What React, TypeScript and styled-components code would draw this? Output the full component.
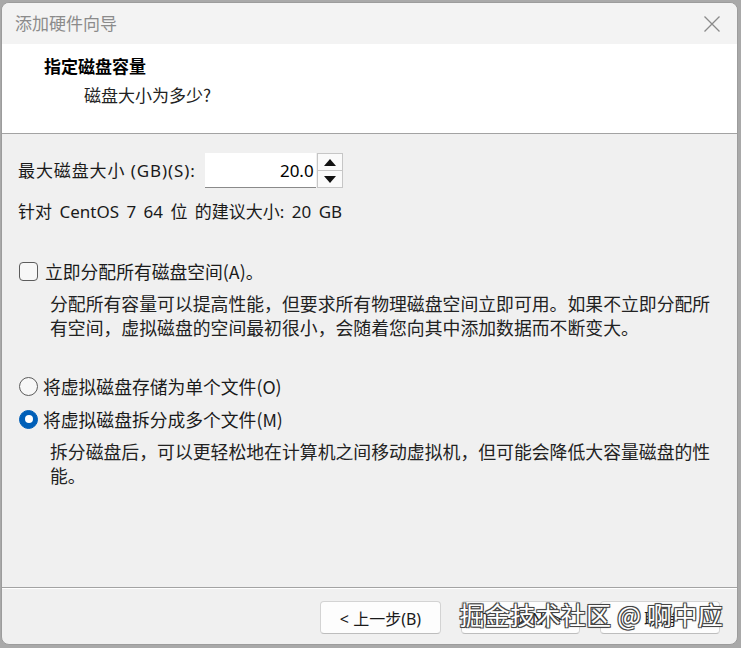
import React from "react";
import styled, { createGlobalStyle } from "styled-components";

const GlobalStyle = createGlobalStyle`
  html, body {
    margin: 0;
    padding: 0;
    background: #a9a9a9;
  }
  body {
    font-family: "Noto Sans", "Noto Sans CJK SC", sans-serif;
    color: #1a1a1a;
  }
`;

const Screen = styled.div`
  width: 741px;
  height: 648px;
  padding: 2px 3px 3px 1px;
  box-sizing: border-box;
  display: flex;
`;

const Window = styled.div`
  flex: 1;
  display: flex;
  flex-direction: column;
  background: #f0f0f0;
  border: 1px solid #9c9c9c;
  border-radius: 8px;
  overflow: hidden;
  position: relative;
`;

const TitleBar = styled.div`
  height: 41px;
  display: flex;
  align-items: center;
  justify-content: space-between;
  padding: 0 16px 3px 13px;
  box-sizing: border-box;
  background: #f3f3f3;
`;

const TitleText = styled.span`
  font-family: "Noto Sans CJK SC", sans-serif;
  font-size: 17px;
  color: #8b8b8b;
`;

const CloseIcon = styled.svg`
  width: 18px;
  height: 18px;
  margin-top: 3px;
`;

const Header = styled.div`
  height: 90px;
  background: #ffffff;
  border-bottom: 1px solid #a3a3a3;
  box-sizing: border-box;
  padding: 9px 0 0 42px;
  display: flex;
  flex-direction: column;
`;

const HeaderTitle = styled.div`
  font-family: "Noto Sans CJK SC", sans-serif;
  font-size: 17px;
  font-weight: 700;
  line-height: 26px;
  color: #000;
`;

const HeaderSub = styled.div`
  font-family: "Noto Sans CJK SC", sans-serif;
  font-size: 17px;
  line-height: 26px;
  margin-top: 3px;
  padding-left: 40px;
  color: #222;
`;

const Body = styled.div`
  flex: 1;
  padding: 19px 17px 0 16px;
  display: flex;
  flex-direction: column;
`;

const SizeRow = styled.div`
  display: flex;
  align-items: center;
`;

const Label = styled.span`
  font-size: 17px;
  line-height: 24px;
  letter-spacing: 0.9px;
  margin-right: 9px;
`;

const NumberBox = styled.div`
  width: 111px;
  height: 35px;
  box-sizing: border-box;
  background: #fff;
  border-bottom: 1px solid #8a8a8a;
  display: flex;
  align-items: center;
  justify-content: flex-end;
  padding-right: 2px;
  font-size: 17px;
  color: #000;
`;

const Spin = styled.div`
  width: 26px;
  height: 35px;
  margin-left: 1px;
  display: flex;
  flex-direction: column;
  box-sizing: border-box;
  border: 1px solid #c6c6c6;
  background: #fafafa;
`;

const SpinHalf = styled.div<{ $top?: boolean }>`
  flex: 1;
  display: flex;
  align-items: center;
  justify-content: center;
  border-bottom: ${({ $top }) => ($top ? "1px solid #c6c6c6" : "none")};
`;

const Arrow = styled.div<{ $up?: boolean }>`
  width: 0;
  height: 0;
  border-left: 6px solid transparent;
  border-right: 6px solid transparent;
  ${({ $up }) =>
    $up ? "border-bottom: 7px solid #111;" : "border-top: 7px solid #111;"}
`;

const Hint = styled.div`
  font-size: 17px;
  line-height: 24px;
  word-spacing: 3px;
  margin-top: 12px;
`;

const OptionRow = styled.div<{ $gap: number }>`
  display: flex;
  align-items: center;
  margin-top: ${({ $gap }) => $gap}px;
  height: 24px;
`;

const CheckBox = styled.div`
  width: 19px;
  height: 19px;
  box-sizing: border-box;
  border: 1px solid #5c5c5c;
  border-radius: 4px;
  background: #f7f7f7;
  margin: 0 7px 0 1px;
`;

const Radio = styled.div<{ $checked?: boolean }>`
  width: 19px;
  height: 19px;
  box-sizing: border-box;
  border-radius: 50%;
  margin: 0 5px 0 1px;
  display: flex;
  align-items: center;
  justify-content: center;
  border: ${({ $checked }) =>
    $checked ? "1px solid #005fb8" : "1px solid #5c5c5c"};
  background: ${({ $checked }) => ($checked ? "#005fb8" : "#f7f7f7")};

  &::after {
    content: "";
    display: ${({ $checked }) => ($checked ? "block" : "none")};
    width: 8px;
    height: 8px;
    border-radius: 50%;
    background: #fff;
  }
`;

const OptionText = styled.span`
  font-family: "Noto Sans CJK SC", sans-serif;
  font-size: 17.8px;
  line-height: 24px;
  color: #1a1a1a;
`;

const Desc = styled.p`
  margin: 8px 0 0 32px;
  width: 668px;
  font-family: "Noto Sans CJK SC", sans-serif;
  font-size: 17.85px;
  line-height: 24px;
  color: #222;
`;

const Footer = styled.div`
  height: 57px;
  box-sizing: border-box;
  border-top: 1px solid #a3a3a3;
  box-shadow: inset 0 1px 0 #ffffff;
  display: flex;
  justify-content: flex-end;
  align-items: flex-start;
  gap: 20px;
  padding: 13px 17px 0 0;
`;

const Button = styled.button<{ $w: number }>`
  width: ${({ $w }) => $w}px;
  height: 33px;
  background: #fdfdfd;
  border: 1px solid #d3d3d3;
  border-bottom-color: #bdbdbd;
  border-radius: 4px;
  font-family: "Noto Sans", "Noto Sans CJK SC", sans-serif;
  font-size: 16px;
  color: #1a1a1a;
  padding: 0;
`;

const Watermark = styled.div`
  position: absolute;
  right: 14px;
  bottom: 12px;
  font-family: "Noto Sans CJK SC", sans-serif;
  font-size: 25px;
  color: #ffffff;
  letter-spacing: 0.3px;
  text-shadow: 1px 1px 0 #444, -1px -1px 0 #444, 1px -1px 0 #444,
    -1px 1px 0 #444, 0 0 2px #222;
  pointer-events: none;
`;

export default function App() {
  return (
    <>
      <GlobalStyle />
      <Screen>
        <Window>
          <TitleBar>
            <TitleText>添加硬件向导</TitleText>
            <CloseIcon viewBox="0 0 18 18">
              <path
                d="M1.5 1.5 L16.5 16.5 M16.5 1.5 L1.5 16.5"
                stroke="#8a8a8a"
                strokeWidth="1.3"
                fill="none"
              />
            </CloseIcon>
          </TitleBar>
          <Header>
            <HeaderTitle>指定磁盘容量</HeaderTitle>
            <HeaderSub>磁盘大小为多少?</HeaderSub>
          </Header>
          <Body>
            <SizeRow>
              <Label>最大磁盘大小 (GB)(S):</Label>
              <NumberBox>20.0</NumberBox>
              <Spin>
                <SpinHalf $top>
                  <Arrow $up />
                </SpinHalf>
                <SpinHalf>
                  <Arrow />
                </SpinHalf>
              </Spin>
            </SizeRow>
            <Hint>针对 CentOS 7 64 位 的建议大小: 20 GB</Hint>

            <OptionRow $gap={35}>
              <CheckBox />
              <OptionText>立即分配所有磁盘空间(A)。</OptionText>
            </OptionRow>
            <Desc>
              分配所有容量可以提高性能，但要求所有物理磁盘空间立即可用。如果不立即分配所有空间，虚拟磁盘的空间最初很小，会随着您向其中添加数据而不断变大。
            </Desc>

            <OptionRow $gap={35}>
              <Radio />
              <OptionText>将虚拟磁盘存储为单个文件(O)</OptionText>
            </OptionRow>
            <OptionRow $gap={9}>
              <Radio $checked />
              <OptionText>将虚拟磁盘拆分成多个文件(M)</OptionText>
            </OptionRow>
            <Desc>
              拆分磁盘后，可以更轻松地在计算机之间移动虚拟机，但可能会降低大容量磁盘的性能。
            </Desc>
          </Body>
          <Footer>
            <Button $w={121}>&lt; 上一步(B)</Button>
            <Button $w={119}>下一步(N) &gt;</Button>
            <Button $w={120}>取消</Button>
          </Footer>
          <Watermark>掘金技术社区 @ 啊中应</Watermark>
        </Window>
      </Screen>
    </>
  );
}
